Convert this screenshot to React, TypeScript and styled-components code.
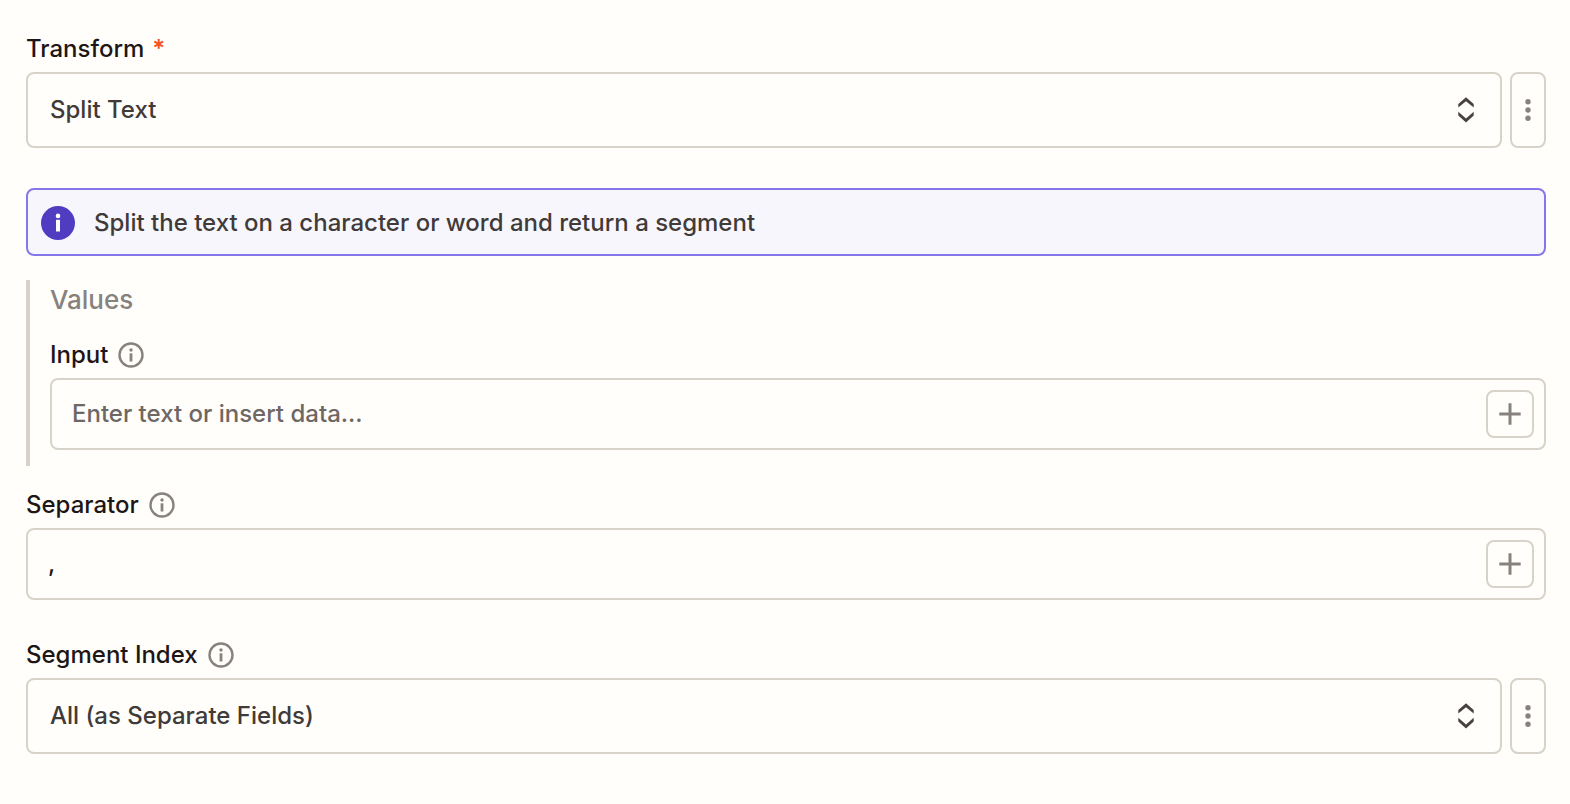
import React from "react";
import styled, { createGlobalStyle } from "styled-components";

const Global = createGlobalStyle`
  * { box-sizing: border-box; }
  body { margin: 0; background: #fffefb; color: #1d1615; font-family: Inter, "Liberation Sans", sans-serif; font-weight: 500; }
  button, input, select { font: inherit; color: inherit; }
`;

const Form = styled.form`
  display: flex;
  flex-direction: column;
  padding: 33px 24px 48px 26px;
`;

const Field = styled.div<{ $gap?: number }>`
  display: flex;
  flex-direction: column;
  margin-bottom: ${(p) => p.$gap ?? 0}px;
`;

const LabelRow = styled.div<{ $tight?: boolean }>`
  display: flex;
  align-items: center;
  gap: ${(p) => (p.$tight ? 8 : 10)}px;
  height: 32px;
  margin-bottom: 7px;
  font-size: 24px;
  line-height: 32px;
`;

const Required = styled.span`
  color: #f4511e;
  font-weight: 600;
`;

const ControlRow = styled.div`
  display: flex;
  gap: 8px;
`;

const SelectBox = styled.div`
  flex: 1;
  display: grid;
  align-items: center;
  > * { grid-area: 1 / 1; }
  > svg { justify-self: end; margin-right: 24px; pointer-events: none; }
`;

const Select = styled.select`
  appearance: none;
  width: 100%;
  height: 76px;
  padding: 0 64px 2px 22px;
  border: 2px solid #d7d3c9;
  border-radius: 8px;
  background: transparent;
  color: #403b38;
  font-size: 24px;
`;

const MenuButton = styled.button`
  display: grid;
  place-items: center;
  width: 36px;
  height: 76px;
  padding: 0;
  border: 2px solid #d7d3c9;
  border-radius: 8px;
  background: transparent;
  color: #88827e;
`;

const Notice = styled.div`
  display: flex;
  align-items: center;
  gap: 18px;
  height: 68px;
  margin-bottom: 24px;
  padding: 2px 12px 0;
  border: 2px solid #8577ea;
  border-radius: 8px;
  background: #f7f6fd;
  color: #403b38;
  font-size: 24px;
  line-height: 32px;
`;

const Group = styled.fieldset`
  min-width: 0;
  margin: 0 0 23px;
  padding: 0 0 16px 20px;
  border: 0;
  border-left: 4px solid #d7d3c9;
`;

const GroupTitle = styled.div`
  height: 40px;
  margin-bottom: 19px;
  color: #88827e;
  font-size: 26px;
  line-height: 40px;
`;

const TextBox = styled.div`
  display: flex;
  align-items: center;
  height: 72px;
  padding: 0 10px 0 20px;
  border: 2px solid #d7d3c9;
  border-radius: 8px;
`;

const TextInput = styled.input`
  flex: 1;
  min-width: 0;
  height: 100%;
  padding: 0 0 2px;
  border: 0;
  outline: 0;
  background: transparent;
  font-size: 24px;
  &::placeholder { color: #6e6763; opacity: 1; }
`;

const AddButton = styled.button`
  display: grid;
  place-items: center;
  width: 48px;
  height: 48px;
  padding: 0;
  border: 2px solid #d7d3c9;
  border-radius: 8px;
  background: transparent;
  color: #88827e;
`;

const InfoIcon = () => (
  <svg width="26" height="26" viewBox="0 0 26 26" role="img" aria-label="More information">
    <circle cx="13" cy="13" r="11.5" fill="none" stroke="#88827e" strokeWidth="2.4" />
    <circle cx="13" cy="8" r="1.7" fill="#88827e" />
    <path d="M13 11.300v8.200" stroke="#88827e" strokeWidth="2.800" />
  </svg>
);

const NoticeIcon = () => (
  <svg width="36" height="36" viewBox="0 0 36 36" aria-hidden="true">
    <circle cx="18" cy="18" r="17" fill="#4f3cc0" />
    <circle cx="18" cy="10.900" r="2.300" fill="#fff" />
    <path d="M18 14.800v11.700" stroke="#fff" strokeWidth="4" />
  </svg>
);

const Chevrons = () => (
  <svg width="24" height="28" viewBox="0 0 24 28" fill="#47423f" aria-hidden="true">
    <path d="M4.300 8 12 1.300 19.700 8v3.400L12 5.200 4.300 11.400z" />
    <path d="M4.300 15.800 12 22.400l7.700-6.600v3.600L12 26.400 4.300 19.400z" />
  </svg>
);

const Dots = () => (
  <svg width="8" height="24" viewBox="0 0 8 24" fill="currentColor" aria-hidden="true">
    <circle cx="4" cy="3.800" r="2.700" />
    <circle cx="4" cy="12" r="2.700" />
    <circle cx="4" cy="20.200" r="2.700" />
  </svg>
);

const Plus = () => (
  <svg width="24" height="24" viewBox="0 0 24 24" aria-hidden="true">
    <path d="M12 1.300v21.400M1.300 12h21.400" stroke="currentColor" strokeWidth="3" />
  </svg>
);

function SelectField({ id, label, value, required, info, gap }: { id: string; label: string; value: string; required?: boolean; info?: boolean; gap?: number }) {
  return (
    <Field $gap={gap}>
      <LabelRow $tight={required}>
        <label htmlFor={id}>{label}</label>
        {required && <Required>*</Required>}
        {info && <InfoIcon />}
      </LabelRow>
      <ControlRow>
        <SelectBox>
          <Select id={id} defaultValue={value}>
            <option>{value}</option>
          </Select>
          <Chevrons />
        </SelectBox>
        <MenuButton type="button" aria-label={label + " options"}><Dots /></MenuButton>
      </ControlRow>
    </Field>
  );
}

function TextField({ id, label, value, placeholder, gap }: { id: string; label: string; value?: string; placeholder?: string; gap?: number }) {
  return (
    <Field $gap={gap}>
      <LabelRow>
        <label htmlFor={id}>{label}</label>
        <InfoIcon />
      </LabelRow>
      <TextBox>
        <TextInput id={id} defaultValue={value} placeholder={placeholder} />
        <AddButton type="button" aria-label={"Insert data into " + label}><Plus /></AddButton>
      </TextBox>
    </Field>
  );
}

export default function App() {
  return (
    <>
      <Global />
      <Form>
        <SelectField id="transform" label="Transform" value="Split Text" required gap={40} />
        <Notice><NoticeIcon />Split the text on a character or word and return a segment</Notice>
        <Group aria-labelledby="values-title">
          <GroupTitle id="values-title">Values</GroupTitle>
          <TextField id="input" label="Input" placeholder="Enter text or insert data..." />
        </Group>
        <TextField id="separator" label="Separator" value="," gap={39} />
        <SelectField id="segment" label="Segment Index" value="All (as Separate Fields)" info />
      </Form>
    </>
  );
}
